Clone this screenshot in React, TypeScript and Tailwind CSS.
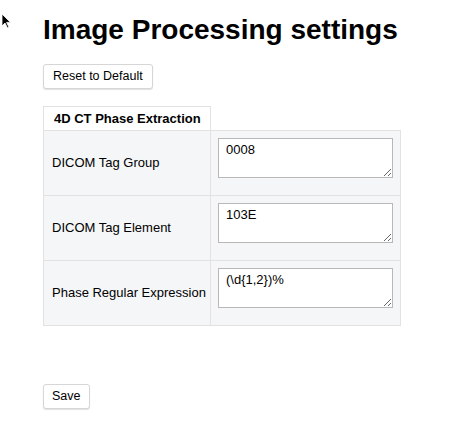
import React from "react";

const rows = [
  { label: "DICOM Tag Group", value: "0008" },
  { label: "DICOM Tag Element", value: "103E" },
  { label: "Phase Regular Expression", value: "(\\d{1,2})%" },
];

export default function App() {
  return (
    <div className="relative min-h-[424px] bg-white pl-[43px] pt-[12px] text-black font-['Liberation_Sans',Arial,sans-serif]">
      {/* mouse pointer left in the screenshot */}
      <svg className="absolute left-[1px] top-[13px]" width="10" height="16" viewBox="0 0 10 16">
        <path d="M1 1 L1 13 L4 10 L6.5 15 L8 14.3 L5.6 9.4 L9.5 9.4 Z" fill="#000" stroke="#fff" strokeWidth="0.8" />
      </svg>

      <h1 className="text-[28px] font-bold leading-[36px]">Image Processing settings</h1>

      <button className="mt-[16px] h-[25px] px-[9px] bg-white border border-[#d6d6d6] rounded-[3px] shadow-[0_1px_1px_rgba(0,0,0,0.12)] text-[12.5px] leading-none">
        Reset to Default
      </button>

      <table className="mt-[17px] w-[357px] table-fixed border-collapse text-[13px]">
        <thead>
          <tr>
            <th className="h-[24px] w-[167px] whitespace-nowrap border border-[#e2e2e2] bg-white px-[10px] text-left text-[13px] font-bold">
              4D CT Phase Extraction
            </th>
            <th className="w-[190px]"></th>
          </tr>
        </thead>
        <tbody>
          {rows.map((r) => (
            <tr key={r.label} className="h-[65px] bg-[#f5f6f8]">
              <td className="whitespace-nowrap border border-[#e2e2e2] pl-[8px] align-middle">{r.label}</td>
              <td className="border border-[#e2e2e2] pl-[7px] pr-[7px] pt-[7px] pb-[17px] align-top">
                <textarea
                  defaultValue={r.value}
                  className="block h-[40px] w-[175px] border border-[#b8b8b8] bg-white px-[7px] py-[3px] text-[13px] leading-[16px] font-['Liberation_Sans',Arial,sans-serif] outline-none"
                />
              </td>
            </tr>
          ))}
        </tbody>
      </table>

      <button className="mt-[58px] h-[25px] px-[8px] bg-white border border-[#d6d6d6] rounded-[3px] shadow-[0_1px_1px_rgba(0,0,0,0.12)] text-[12.5px] leading-none">
        Save
      </button>
    </div>
  );
}
